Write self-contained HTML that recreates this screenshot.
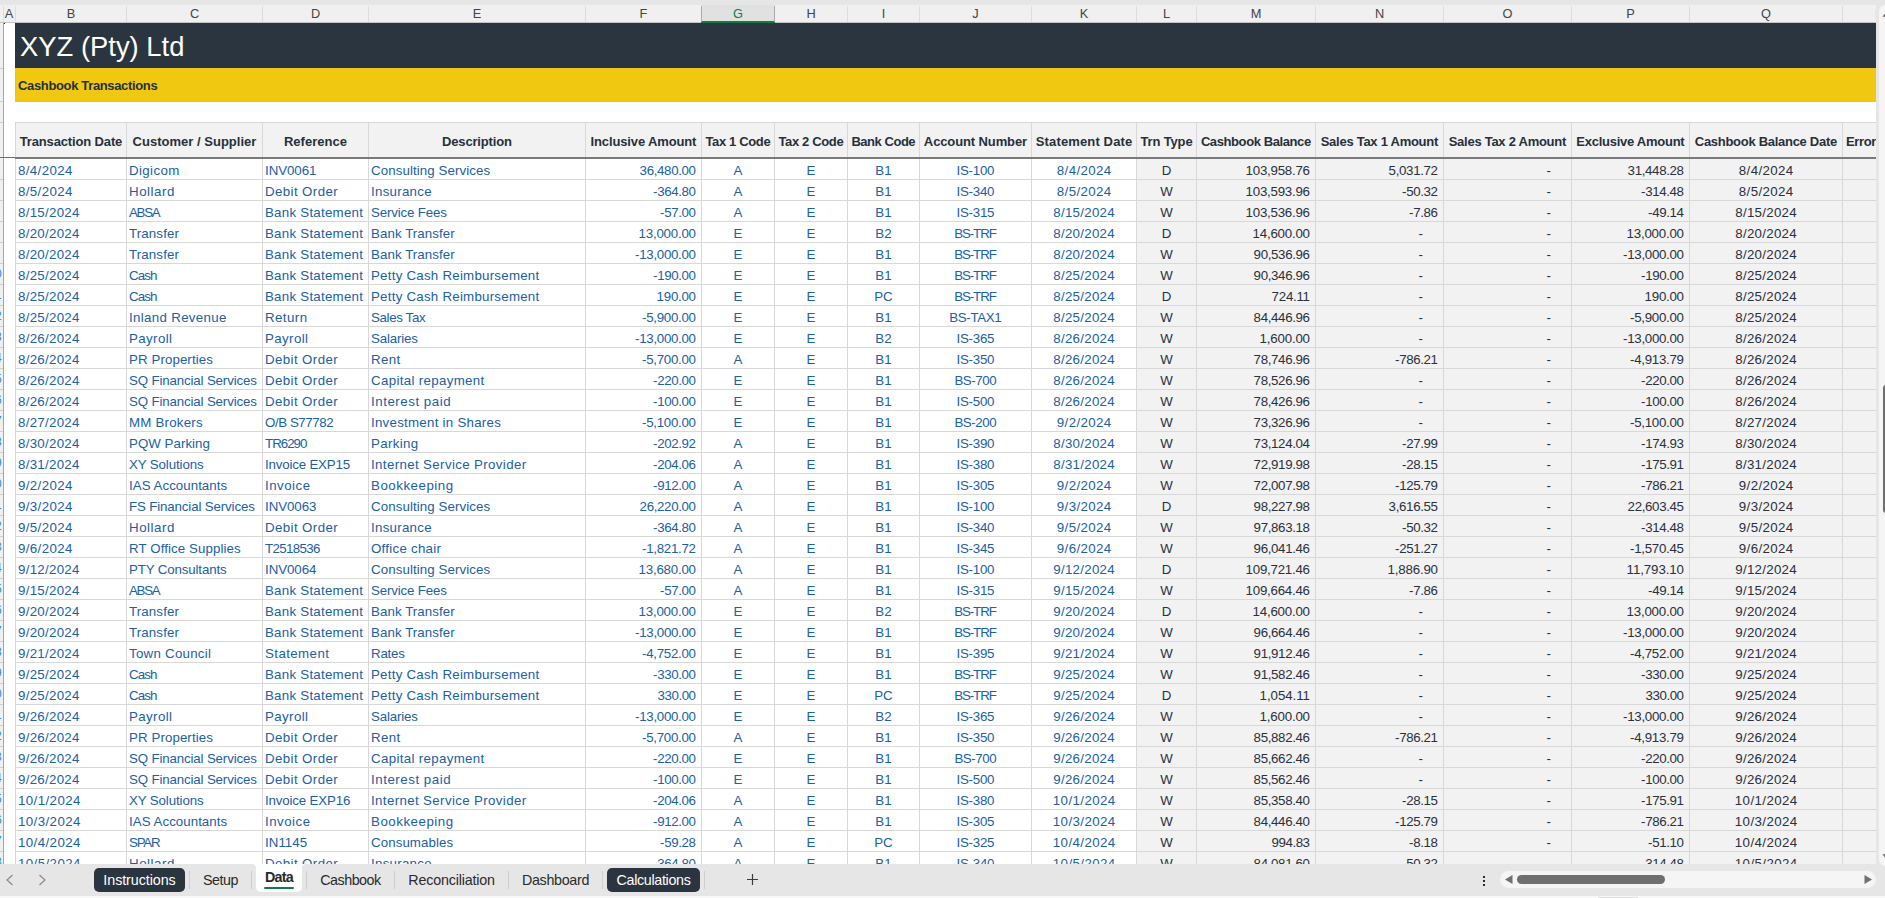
<!DOCTYPE html>
<html lang="en"><head><meta charset="utf-8"><title>Cashbook Transactions</title>
<style>
html,body{margin:0;padding:0}
body{width:1885px;height:898px;overflow:hidden;background:#e6e6e6;position:relative;font-family:"Liberation Sans",sans-serif;}
.abs,.abs *{position:absolute}
#app{position:absolute;left:0;top:0;width:1885px;height:898px;overflow:hidden}
#app div,#app span{position:absolute;white-space:nowrap}
#colhdr{left:0;top:5px;width:1876px;height:18px;background:#f0f0f0}
#colhdr .c{top:0px;height:17px;line-height:17px;text-align:center;font-size:12.8px;color:#444}
#colhdr .s{top:1px;width:1px;height:16px;background:#dcdcdc}
#sheet{left:0;top:23px;width:1876px;height:841px;background:#fff;overflow:hidden}
.vl{width:1px;background:#d8d8d8}
.hl{height:1px;background:#d8d8d8}
.t{font-size:13.3px;height:21px;line-height:21px;color:#2060a6}
.g{color:#2a303c}
.h{font-size:13.0px;font-weight:bold;color:#27303a;height:34px;line-height:34px;text-align:center}
.l{text-align:left}.r{text-align:right}.c{text-align:center}
#tabs{left:0;top:864px;width:1885px;height:32px;background:#e6e6e6}
#tabs .tab{top:4px;height:24px;line-height:24px;font-size:14.3px;color:#2b2b2b;text-align:center}
#tabs .pill{background:#2b353f;color:#fff;border-radius:5px}
#tabs .sep{top:7px;width:1px;height:18px;background:#cfcfcf}

</style></head><body><div id="app">
<div id="colhdr">
<div style="left:701px;top:0;width:74px;height:18px;background:#e1e1e1"></div>
<div style="left:0;top:17px;width:1876px;height:1px;background:#c4c4c4"></div>
<div style="left:701px;top:16px;width:74px;height:2px;background:#107c41"></div>
<div class="c" style="left:3px;width:12px">A</div>
<div class="s" style="left:3px"></div>
<div class="c" style="left:16px;width:110px">B</div>
<div class="c" style="left:127px;width:135px">C</div>
<div class="c" style="left:263px;width:105px">D</div>
<div class="c" style="left:369px;width:216px">E</div>
<div class="c" style="left:586px;width:115px">F</div>
<div class="c" style="left:702px;width:72px;color:#107c41">G</div>
<div class="c" style="left:775px;width:72px">H</div>
<div class="c" style="left:848px;width:71px">I</div>
<div class="c" style="left:920px;width:111px">J</div>
<div class="c" style="left:1032px;width:104px">K</div>
<div class="c" style="left:1137px;width:59px">L</div>
<div class="c" style="left:1197px;width:118px">M</div>
<div class="c" style="left:1316px;width:127px">N</div>
<div class="c" style="left:1444px;width:127px">O</div>
<div class="c" style="left:1572px;width:117px">P</div>
<div class="c" style="left:1690px;width:152px">Q</div>
<div class="s" style="left:15px"></div>
<div class="s" style="left:126px"></div>
<div class="s" style="left:262px"></div>
<div class="s" style="left:368px"></div>
<div class="s" style="left:585px"></div>
<div class="s" style="left:701px;background:#ababab"></div>
<div class="s" style="left:774px;background:#ababab"></div>
<div class="s" style="left:847px"></div>
<div class="s" style="left:919px"></div>
<div class="s" style="left:1031px"></div>
<div class="s" style="left:1136px"></div>
<div class="s" style="left:1196px"></div>
<div class="s" style="left:1315px"></div>
<div class="s" style="left:1443px"></div>
<div class="s" style="left:1571px"></div>
<div class="s" style="left:1689px"></div>
<div class="s" style="left:1842px"></div>
</div>
<div id="sheet">
<div style="left:1137px;top:136px;width:739px;height:720px;background:#f2f2f2"></div>
<div style="left:15px;top:0;width:1861px;height:45px;background:#2b353f"></div>
<div style="left:15px;top:45px;width:1861px;height:34px;background:#f1c811"></div>
<div id="title" style="left:20px;top:1px;height:45px;line-height:45px;font-size:27.4px;color:#fff">XYZ (Pty) Ltd</div>
<div id="sub" style="left:18px;top:46px;height:33px;line-height:33px;font-size:13.0px;letter-spacing:-0.351px;font-weight:bold;color:#27303a">Cashbook Transactions</div>
<div style="left:15px;top:99px;width:1861px;height:35px;background:#f2f2f2"></div>
<div class="hl" style="left:15px;top:99px;width:1861px"></div>
<div class="hl" style="left:15px;top:156px;width:1861px"></div>
<div class="hl" style="left:15px;top:177px;width:1861px"></div>
<div class="hl" style="left:15px;top:198px;width:1861px"></div>
<div class="hl" style="left:15px;top:219px;width:1861px"></div>
<div class="hl" style="left:15px;top:240px;width:1861px"></div>
<div class="hl" style="left:15px;top:261px;width:1861px"></div>
<div class="hl" style="left:15px;top:282px;width:1861px"></div>
<div class="hl" style="left:15px;top:303px;width:1861px"></div>
<div class="hl" style="left:15px;top:324px;width:1861px"></div>
<div class="hl" style="left:15px;top:345px;width:1861px"></div>
<div class="hl" style="left:15px;top:366px;width:1861px"></div>
<div class="hl" style="left:15px;top:387px;width:1861px"></div>
<div class="hl" style="left:15px;top:408px;width:1861px"></div>
<div class="hl" style="left:15px;top:429px;width:1861px"></div>
<div class="hl" style="left:15px;top:450px;width:1861px"></div>
<div class="hl" style="left:15px;top:471px;width:1861px"></div>
<div class="hl" style="left:15px;top:492px;width:1861px"></div>
<div class="hl" style="left:15px;top:513px;width:1861px"></div>
<div class="hl" style="left:15px;top:534px;width:1861px"></div>
<div class="hl" style="left:15px;top:555px;width:1861px"></div>
<div class="hl" style="left:15px;top:576px;width:1861px"></div>
<div class="hl" style="left:15px;top:597px;width:1861px"></div>
<div class="hl" style="left:15px;top:618px;width:1861px"></div>
<div class="hl" style="left:15px;top:639px;width:1861px"></div>
<div class="hl" style="left:15px;top:660px;width:1861px"></div>
<div class="hl" style="left:15px;top:681px;width:1861px"></div>
<div class="hl" style="left:15px;top:702px;width:1861px"></div>
<div class="hl" style="left:15px;top:723px;width:1861px"></div>
<div class="hl" style="left:15px;top:744px;width:1861px"></div>
<div class="hl" style="left:15px;top:765px;width:1861px"></div>
<div class="hl" style="left:15px;top:786px;width:1861px"></div>
<div class="hl" style="left:15px;top:807px;width:1861px"></div>
<div class="hl" style="left:15px;top:828px;width:1861px"></div>
<div class="hl" style="left:15px;top:849px;width:1861px"></div>
<div class="vl" style="left:15px;top:99px;height:742px"></div>
<div class="vl" style="left:126px;top:99px;height:742px"></div>
<div class="vl" style="left:262px;top:99px;height:742px"></div>
<div class="vl" style="left:368px;top:99px;height:742px"></div>
<div class="vl" style="left:585px;top:99px;height:742px"></div>
<div class="vl" style="left:701px;top:99px;height:742px"></div>
<div class="vl" style="left:774px;top:99px;height:742px"></div>
<div class="vl" style="left:847px;top:99px;height:742px"></div>
<div class="vl" style="left:919px;top:99px;height:742px"></div>
<div class="vl" style="left:1031px;top:99px;height:742px"></div>
<div class="vl" style="left:1136px;top:99px;height:742px"></div>
<div class="vl" style="left:1196px;top:99px;height:742px"></div>
<div class="vl" style="left:1315px;top:99px;height:742px"></div>
<div class="vl" style="left:1443px;top:99px;height:742px"></div>
<div class="vl" style="left:1571px;top:99px;height:742px"></div>
<div class="vl" style="left:1689px;top:99px;height:742px"></div>
<div class="vl" style="left:1842px;top:99px;height:742px"></div>
<div style="left:15px;top:134px;width:1861px;height:2px;background:#7a7a7a"></div>
<div class="h" style="left:16px;width:110px;top:102px;letter-spacing:-0.142px;text-indent:-0.142px">Transaction Date</div>
<div class="h" style="left:127px;width:135px;top:102px;letter-spacing:0.013px;text-indent:0.013px">Customer / Supplier</div>
<div class="h" style="left:263px;width:105px;top:102px;letter-spacing:0.033px;text-indent:0.033px">Reference</div>
<div class="h" style="left:369px;width:216px;top:102px;letter-spacing:-0.157px;text-indent:-0.157px">Description</div>
<div class="h" style="left:586px;width:115px;top:102px;letter-spacing:-0.135px;text-indent:-0.135px">Inclusive Amount</div>
<div class="h" style="left:702px;width:72px;top:102px;letter-spacing:-0.351px;text-indent:-0.351px">Tax 1 Code</div>
<div class="h" style="left:775px;width:72px;top:102px;letter-spacing:-0.351px;text-indent:-0.351px">Tax 2 Code</div>
<div class="h" style="left:848px;width:71px;top:102px;letter-spacing:-0.459px;text-indent:-0.459px">Bank Code</div>
<div class="h" style="left:920px;width:111px;top:102px;letter-spacing:-0.113px;text-indent:-0.113px">Account Number</div>
<div class="h" style="left:1032px;width:104px;top:102px;letter-spacing:0.138px;text-indent:0.138px">Statement Date</div>
<div class="h" style="left:1137px;width:59px;top:102px;letter-spacing:-0.14px;text-indent:-0.14px">Trn Type</div>
<div class="h" style="left:1197px;width:118px;top:102px;letter-spacing:-0.406px;text-indent:-0.406px">Cashbook Balance</div>
<div class="h" style="left:1316px;width:127px;top:102px;letter-spacing:-0.267px;text-indent:-0.267px">Sales Tax 1 Amount</div>
<div class="h" style="left:1444px;width:127px;top:102px;letter-spacing:-0.267px;text-indent:-0.267px">Sales Tax 2 Amount</div>
<div class="h" style="left:1572px;width:117px;top:102px;letter-spacing:-0.258px;text-indent:-0.258px">Exclusive Amount</div>
<div class="h" style="left:1690px;width:152px;top:102px;letter-spacing:-0.289px;text-indent:-0.289px">Cashbook Balance Date</div>
<div class="h" style="left:1846px;top:102px;text-align:left;letter-spacing:-0.35px">Error Code</div>
<div class="t l" style="left:18px;width:108px;letter-spacing:0.377px;top:137px">8/4/2024</div>
<div class="t l" style="left:129px;width:133px;letter-spacing:0.375px;top:137px">Digicom</div>
<div class="t l" style="left:265px;width:103px;letter-spacing:-0.059px;top:137px">INV0061</div>
<div class="t l" style="left:371px;width:214px;letter-spacing:0.091px;top:137px">Consulting Services</div>
<div class="t r" style="left:586px;width:110px;letter-spacing:-0.345px;margin-left:-0.345px;top:137px">36,480.00</div>
<div class="t c" style="left:702px;width:72px;top:137px">A</div>
<div class="t c" style="left:775px;width:72px;top:137px">E</div>
<div class="t c" style="left:848px;width:71px;top:137px">B1</div>
<div class="t c" style="left:920px;width:111px;letter-spacing:-0.276px;text-indent:-0.276px;top:137px">IS-100</div>
<div class="t c" style="left:1032px;width:104px;letter-spacing:0.377px;text-indent:0.377px;top:137px">8/4/2024</div>
<div class="t c g" style="left:1137px;width:59px;top:137px">D</div>
<div class="t r g" style="left:1197px;width:113px;letter-spacing:-0.239px;margin-left:-0.239px;top:137px">103,958.76</div>
<div class="t r g" style="left:1316px;width:122px;letter-spacing:-0.338px;margin-left:-0.338px;top:137px">5,031.72</div>
<div class="t r g" style="left:1444px;width:107px;top:137px">-</div>
<div class="t r g" style="left:1572px;width:112px;letter-spacing:-0.345px;margin-left:-0.345px;top:137px">31,448.28</div>
<div class="t c g" style="left:1690px;width:152px;letter-spacing:0.377px;text-indent:0.377px;top:137px">8/4/2024</div>
<div class="t l" style="left:18px;width:108px;letter-spacing:0.377px;top:158px">8/5/2024</div>
<div class="t l" style="left:129px;width:133px;letter-spacing:0.545px;top:158px">Hollard</div>
<div class="t l" style="left:265px;width:103px;letter-spacing:0.39px;top:158px">Debit Order</div>
<div class="t l" style="left:371px;width:214px;letter-spacing:0.275px;top:158px">Insurance</div>
<div class="t r" style="left:586px;width:110px;letter-spacing:-0.367px;margin-left:-0.367px;top:158px">-364.80</div>
<div class="t c" style="left:702px;width:72px;top:158px">A</div>
<div class="t c" style="left:775px;width:72px;top:158px">E</div>
<div class="t c" style="left:848px;width:71px;top:158px">B1</div>
<div class="t c" style="left:920px;width:111px;letter-spacing:-0.276px;text-indent:-0.276px;top:158px">IS-340</div>
<div class="t c" style="left:1032px;width:104px;letter-spacing:0.377px;text-indent:0.377px;top:158px">8/5/2024</div>
<div class="t c g" style="left:1137px;width:59px;top:158px">W</div>
<div class="t r g" style="left:1197px;width:113px;letter-spacing:-0.239px;margin-left:-0.239px;top:158px">103,593.96</div>
<div class="t r g" style="left:1316px;width:122px;letter-spacing:-0.362px;margin-left:-0.362px;top:158px">-50.32</div>
<div class="t r g" style="left:1444px;width:107px;top:158px">-</div>
<div class="t r g" style="left:1572px;width:112px;letter-spacing:-0.367px;margin-left:-0.367px;top:158px">-314.48</div>
<div class="t c g" style="left:1690px;width:152px;letter-spacing:0.377px;text-indent:0.377px;top:158px">8/5/2024</div>
<div class="t l" style="left:18px;width:108px;letter-spacing:0.28px;top:179px">8/15/2024</div>
<div class="t l" style="left:129px;width:133px;letter-spacing:-1.302px;top:179px">ABSA</div>
<div class="t l" style="left:265px;width:103px;letter-spacing:0.253px;top:179px">Bank Statement</div>
<div class="t l" style="left:371px;width:214px;letter-spacing:-0.159px;top:179px">Service Fees</div>
<div class="t r" style="left:586px;width:110px;letter-spacing:-0.362px;margin-left:-0.362px;top:179px">-57.00</div>
<div class="t c" style="left:702px;width:72px;top:179px">A</div>
<div class="t c" style="left:775px;width:72px;top:179px">E</div>
<div class="t c" style="left:848px;width:71px;top:179px">B1</div>
<div class="t c" style="left:920px;width:111px;letter-spacing:-0.276px;text-indent:-0.276px;top:179px">IS-315</div>
<div class="t c" style="left:1032px;width:104px;letter-spacing:0.28px;text-indent:0.28px;top:179px">8/15/2024</div>
<div class="t c g" style="left:1137px;width:59px;top:179px">W</div>
<div class="t r g" style="left:1197px;width:113px;letter-spacing:-0.239px;margin-left:-0.239px;top:179px">103,536.96</div>
<div class="t r g" style="left:1316px;width:122px;letter-spacing:-0.353px;margin-left:-0.353px;top:179px">-7.86</div>
<div class="t r g" style="left:1444px;width:107px;top:179px">-</div>
<div class="t r g" style="left:1572px;width:112px;letter-spacing:-0.362px;margin-left:-0.362px;top:179px">-49.14</div>
<div class="t c g" style="left:1690px;width:152px;letter-spacing:0.28px;text-indent:0.28px;top:179px">8/15/2024</div>
<div class="t l" style="left:18px;width:108px;letter-spacing:0.28px;top:200px">8/20/2024</div>
<div class="t l" style="left:129px;width:133px;letter-spacing:0.131px;top:200px">Transfer</div>
<div class="t l" style="left:265px;width:103px;letter-spacing:0.253px;top:200px">Bank Statement</div>
<div class="t l" style="left:371px;width:214px;letter-spacing:0.076px;top:200px">Bank Transfer</div>
<div class="t r" style="left:586px;width:110px;letter-spacing:-0.22px;margin-left:-0.22px;top:200px">13,000.00</div>
<div class="t c" style="left:702px;width:72px;top:200px">E</div>
<div class="t c" style="left:775px;width:72px;top:200px">E</div>
<div class="t c" style="left:848px;width:71px;top:200px">B2</div>
<div class="t c" style="left:920px;width:111px;letter-spacing:-1.078px;text-indent:-1.078px;top:200px">BS-TRF</div>
<div class="t c" style="left:1032px;width:104px;letter-spacing:0.28px;text-indent:0.28px;top:200px">8/20/2024</div>
<div class="t c g" style="left:1137px;width:59px;top:200px">D</div>
<div class="t r g" style="left:1197px;width:113px;letter-spacing:-0.22px;margin-left:-0.22px;top:200px">14,600.00</div>
<div class="t r g" style="left:1316px;width:107px;top:200px">-</div>
<div class="t r g" style="left:1444px;width:107px;top:200px">-</div>
<div class="t r g" style="left:1572px;width:112px;letter-spacing:-0.22px;margin-left:-0.22px;top:200px">13,000.00</div>
<div class="t c g" style="left:1690px;width:152px;letter-spacing:0.28px;text-indent:0.28px;top:200px">8/20/2024</div>
<div class="t l" style="left:18px;width:108px;letter-spacing:0.28px;top:221px">8/20/2024</div>
<div class="t l" style="left:129px;width:133px;letter-spacing:0.131px;top:221px">Transfer</div>
<div class="t l" style="left:265px;width:103px;letter-spacing:0.253px;top:221px">Bank Statement</div>
<div class="t l" style="left:371px;width:214px;letter-spacing:0.076px;top:221px">Bank Transfer</div>
<div class="t r" style="left:586px;width:110px;letter-spacing:-0.299px;margin-left:-0.299px;top:221px">-13,000.00</div>
<div class="t c" style="left:702px;width:72px;top:221px">E</div>
<div class="t c" style="left:775px;width:72px;top:221px">E</div>
<div class="t c" style="left:848px;width:71px;top:221px">B1</div>
<div class="t c" style="left:920px;width:111px;letter-spacing:-1.078px;text-indent:-1.078px;top:221px">BS-TRF</div>
<div class="t c" style="left:1032px;width:104px;letter-spacing:0.28px;text-indent:0.28px;top:221px">8/20/2024</div>
<div class="t c g" style="left:1137px;width:59px;top:221px">W</div>
<div class="t r g" style="left:1197px;width:113px;letter-spacing:-0.345px;margin-left:-0.345px;top:221px">90,536.96</div>
<div class="t r g" style="left:1316px;width:107px;top:221px">-</div>
<div class="t r g" style="left:1444px;width:107px;top:221px">-</div>
<div class="t r g" style="left:1572px;width:112px;letter-spacing:-0.299px;margin-left:-0.299px;top:221px">-13,000.00</div>
<div class="t c g" style="left:1690px;width:152px;letter-spacing:0.28px;text-indent:0.28px;top:221px">8/20/2024</div>
<div class="t l" style="left:18px;width:108px;letter-spacing:0.28px;top:242px">8/25/2024</div>
<div class="t l" style="left:129px;width:133px;letter-spacing:-0.882px;top:242px">Cash</div>
<div class="t l" style="left:265px;width:103px;letter-spacing:0.253px;top:242px">Bank Statement</div>
<div class="t l" style="left:371px;width:214px;letter-spacing:0.244px;top:242px">Petty Cash Reimbursement</div>
<div class="t r" style="left:586px;width:110px;letter-spacing:-0.367px;margin-left:-0.367px;top:242px">-190.00</div>
<div class="t c" style="left:702px;width:72px;top:242px">E</div>
<div class="t c" style="left:775px;width:72px;top:242px">E</div>
<div class="t c" style="left:848px;width:71px;top:242px">B1</div>
<div class="t c" style="left:920px;width:111px;letter-spacing:-1.078px;text-indent:-1.078px;top:242px">BS-TRF</div>
<div class="t c" style="left:1032px;width:104px;letter-spacing:0.28px;text-indent:0.28px;top:242px">8/25/2024</div>
<div class="t c g" style="left:1137px;width:59px;top:242px">W</div>
<div class="t r g" style="left:1197px;width:113px;letter-spacing:-0.345px;margin-left:-0.345px;top:242px">90,346.96</div>
<div class="t r g" style="left:1316px;width:107px;top:242px">-</div>
<div class="t r g" style="left:1444px;width:107px;top:242px">-</div>
<div class="t r g" style="left:1572px;width:112px;letter-spacing:-0.367px;margin-left:-0.367px;top:242px">-190.00</div>
<div class="t c g" style="left:1690px;width:152px;letter-spacing:0.28px;text-indent:0.28px;top:242px">8/25/2024</div>
<div class="t l" style="left:18px;width:108px;letter-spacing:0.28px;top:263px">8/25/2024</div>
<div class="t l" style="left:129px;width:133px;letter-spacing:-0.882px;top:263px">Cash</div>
<div class="t l" style="left:265px;width:103px;letter-spacing:0.253px;top:263px">Bank Statement</div>
<div class="t l" style="left:371px;width:214px;letter-spacing:0.244px;top:263px">Petty Cash Reimbursement</div>
<div class="t r" style="left:586px;width:110px;letter-spacing:-0.255px;margin-left:-0.255px;top:263px">190.00</div>
<div class="t c" style="left:702px;width:72px;top:263px">E</div>
<div class="t c" style="left:775px;width:72px;top:263px">E</div>
<div class="t c" style="left:848px;width:71px;top:263px">PC</div>
<div class="t c" style="left:920px;width:111px;letter-spacing:-1.078px;text-indent:-1.078px;top:263px">BS-TRF</div>
<div class="t c" style="left:1032px;width:104px;letter-spacing:0.28px;text-indent:0.28px;top:263px">8/25/2024</div>
<div class="t c g" style="left:1137px;width:59px;top:263px">D</div>
<div class="t r g" style="left:1197px;width:113px;letter-spacing:-0.258px;margin-left:-0.258px;top:263px">724.11</div>
<div class="t r g" style="left:1316px;width:107px;top:263px">-</div>
<div class="t r g" style="left:1444px;width:107px;top:263px">-</div>
<div class="t r g" style="left:1572px;width:112px;letter-spacing:-0.255px;margin-left:-0.255px;top:263px">190.00</div>
<div class="t c g" style="left:1690px;width:152px;letter-spacing:0.28px;text-indent:0.28px;top:263px">8/25/2024</div>
<div class="t l" style="left:18px;width:108px;letter-spacing:0.28px;top:284px">8/25/2024</div>
<div class="t l" style="left:129px;width:133px;letter-spacing:0.327px;top:284px">Inland Revenue</div>
<div class="t l" style="left:265px;width:103px;letter-spacing:0.437px;top:284px">Return</div>
<div class="t l" style="left:371px;width:214px;letter-spacing:-0.35px;top:284px">Sales Tax</div>
<div class="t r" style="left:586px;width:110px;letter-spacing:-0.287px;margin-left:-0.287px;top:284px">-5,900.00</div>
<div class="t c" style="left:702px;width:72px;top:284px">E</div>
<div class="t c" style="left:775px;width:72px;top:284px">E</div>
<div class="t c" style="left:848px;width:71px;top:284px">B1</div>
<div class="t c" style="left:920px;width:111px;letter-spacing:-0.34px;text-indent:-0.34px;top:284px">BS-TAX1</div>
<div class="t c" style="left:1032px;width:104px;letter-spacing:0.28px;text-indent:0.28px;top:284px">8/25/2024</div>
<div class="t c g" style="left:1137px;width:59px;top:284px">W</div>
<div class="t r g" style="left:1197px;width:113px;letter-spacing:-0.345px;margin-left:-0.345px;top:284px">84,446.96</div>
<div class="t r g" style="left:1316px;width:107px;top:284px">-</div>
<div class="t r g" style="left:1444px;width:107px;top:284px">-</div>
<div class="t r g" style="left:1572px;width:112px;letter-spacing:-0.287px;margin-left:-0.287px;top:284px">-5,900.00</div>
<div class="t c g" style="left:1690px;width:152px;letter-spacing:0.28px;text-indent:0.28px;top:284px">8/25/2024</div>
<div class="t l" style="left:18px;width:108px;letter-spacing:0.28px;top:305px">8/26/2024</div>
<div class="t l" style="left:129px;width:133px;letter-spacing:0.385px;top:305px">Payroll</div>
<div class="t l" style="left:265px;width:103px;letter-spacing:0.385px;top:305px">Payroll</div>
<div class="t l" style="left:371px;width:214px;letter-spacing:-0.17px;top:305px">Salaries</div>
<div class="t r" style="left:586px;width:110px;letter-spacing:-0.299px;margin-left:-0.299px;top:305px">-13,000.00</div>
<div class="t c" style="left:702px;width:72px;top:305px">E</div>
<div class="t c" style="left:775px;width:72px;top:305px">E</div>
<div class="t c" style="left:848px;width:71px;top:305px">B2</div>
<div class="t c" style="left:920px;width:111px;letter-spacing:-0.276px;text-indent:-0.276px;top:305px">IS-365</div>
<div class="t c" style="left:1032px;width:104px;letter-spacing:0.28px;text-indent:0.28px;top:305px">8/26/2024</div>
<div class="t c g" style="left:1137px;width:59px;top:305px">W</div>
<div class="t r g" style="left:1197px;width:113px;letter-spacing:-0.195px;margin-left:-0.195px;top:305px">1,600.00</div>
<div class="t r g" style="left:1316px;width:107px;top:305px">-</div>
<div class="t r g" style="left:1444px;width:107px;top:305px">-</div>
<div class="t r g" style="left:1572px;width:112px;letter-spacing:-0.299px;margin-left:-0.299px;top:305px">-13,000.00</div>
<div class="t c g" style="left:1690px;width:152px;letter-spacing:0.28px;text-indent:0.28px;top:305px">8/26/2024</div>
<div class="t l" style="left:18px;width:108px;letter-spacing:0.28px;top:326px">8/26/2024</div>
<div class="t l" style="left:129px;width:133px;letter-spacing:0.09px;top:326px">PR Properties</div>
<div class="t l" style="left:265px;width:103px;letter-spacing:0.39px;top:326px">Debit Order</div>
<div class="t l" style="left:371px;width:214px;letter-spacing:0.369px;top:326px">Rent</div>
<div class="t r" style="left:586px;width:110px;letter-spacing:-0.287px;margin-left:-0.287px;top:326px">-5,700.00</div>
<div class="t c" style="left:702px;width:72px;top:326px">A</div>
<div class="t c" style="left:775px;width:72px;top:326px">E</div>
<div class="t c" style="left:848px;width:71px;top:326px">B1</div>
<div class="t c" style="left:920px;width:111px;letter-spacing:-0.276px;text-indent:-0.276px;top:326px">IS-350</div>
<div class="t c" style="left:1032px;width:104px;letter-spacing:0.28px;text-indent:0.28px;top:326px">8/26/2024</div>
<div class="t c g" style="left:1137px;width:59px;top:326px">W</div>
<div class="t r g" style="left:1197px;width:113px;letter-spacing:-0.345px;margin-left:-0.345px;top:326px">78,746.96</div>
<div class="t r g" style="left:1316px;width:122px;letter-spacing:-0.367px;margin-left:-0.367px;top:326px">-786.21</div>
<div class="t r g" style="left:1444px;width:107px;top:326px">-</div>
<div class="t r g" style="left:1572px;width:112px;letter-spacing:-0.287px;margin-left:-0.287px;top:326px">-4,913.79</div>
<div class="t c g" style="left:1690px;width:152px;letter-spacing:0.28px;text-indent:0.28px;top:326px">8/26/2024</div>
<div class="t l" style="left:18px;width:108px;letter-spacing:0.28px;top:347px">8/26/2024</div>
<div class="t l" style="left:129px;width:133px;letter-spacing:-0.148px;top:347px">SQ Financial Services</div>
<div class="t l" style="left:265px;width:103px;letter-spacing:0.39px;top:347px">Debit Order</div>
<div class="t l" style="left:371px;width:214px;letter-spacing:0.33px;top:347px">Capital repayment</div>
<div class="t r" style="left:586px;width:110px;letter-spacing:-0.367px;margin-left:-0.367px;top:347px">-220.00</div>
<div class="t c" style="left:702px;width:72px;top:347px">E</div>
<div class="t c" style="left:775px;width:72px;top:347px">E</div>
<div class="t c" style="left:848px;width:71px;top:347px">B1</div>
<div class="t c" style="left:920px;width:111px;letter-spacing:-0.451px;text-indent:-0.451px;top:347px">BS-700</div>
<div class="t c" style="left:1032px;width:104px;letter-spacing:0.28px;text-indent:0.28px;top:347px">8/26/2024</div>
<div class="t c g" style="left:1137px;width:59px;top:347px">W</div>
<div class="t r g" style="left:1197px;width:113px;letter-spacing:-0.345px;margin-left:-0.345px;top:347px">78,526.96</div>
<div class="t r g" style="left:1316px;width:107px;top:347px">-</div>
<div class="t r g" style="left:1444px;width:107px;top:347px">-</div>
<div class="t r g" style="left:1572px;width:112px;letter-spacing:-0.367px;margin-left:-0.367px;top:347px">-220.00</div>
<div class="t c g" style="left:1690px;width:152px;letter-spacing:0.28px;text-indent:0.28px;top:347px">8/26/2024</div>
<div class="t l" style="left:18px;width:108px;letter-spacing:0.28px;top:368px">8/26/2024</div>
<div class="t l" style="left:129px;width:133px;letter-spacing:-0.148px;top:368px">SQ Financial Services</div>
<div class="t l" style="left:265px;width:103px;letter-spacing:0.39px;top:368px">Debit Order</div>
<div class="t l" style="left:371px;width:214px;letter-spacing:0.535px;top:368px">Interest paid</div>
<div class="t r" style="left:586px;width:110px;letter-spacing:-0.367px;margin-left:-0.367px;top:368px">-100.00</div>
<div class="t c" style="left:702px;width:72px;top:368px">E</div>
<div class="t c" style="left:775px;width:72px;top:368px">E</div>
<div class="t c" style="left:848px;width:71px;top:368px">B1</div>
<div class="t c" style="left:920px;width:111px;letter-spacing:-0.276px;text-indent:-0.276px;top:368px">IS-500</div>
<div class="t c" style="left:1032px;width:104px;letter-spacing:0.28px;text-indent:0.28px;top:368px">8/26/2024</div>
<div class="t c g" style="left:1137px;width:59px;top:368px">W</div>
<div class="t r g" style="left:1197px;width:113px;letter-spacing:-0.345px;margin-left:-0.345px;top:368px">78,426.96</div>
<div class="t r g" style="left:1316px;width:107px;top:368px">-</div>
<div class="t r g" style="left:1444px;width:107px;top:368px">-</div>
<div class="t r g" style="left:1572px;width:112px;letter-spacing:-0.367px;margin-left:-0.367px;top:368px">-100.00</div>
<div class="t c g" style="left:1690px;width:152px;letter-spacing:0.28px;text-indent:0.28px;top:368px">8/26/2024</div>
<div class="t l" style="left:18px;width:108px;letter-spacing:0.28px;top:389px">8/27/2024</div>
<div class="t l" style="left:129px;width:133px;letter-spacing:0.221px;top:389px">MM Brokers</div>
<div class="t l" style="left:265px;width:103px;letter-spacing:-0.428px;top:389px">O/B S77782</div>
<div class="t l" style="left:371px;width:214px;letter-spacing:0.26px;top:389px">Investment in Shares</div>
<div class="t r" style="left:586px;width:110px;letter-spacing:-0.287px;margin-left:-0.287px;top:389px">-5,100.00</div>
<div class="t c" style="left:702px;width:72px;top:389px">E</div>
<div class="t c" style="left:775px;width:72px;top:389px">E</div>
<div class="t c" style="left:848px;width:71px;top:389px">B1</div>
<div class="t c" style="left:920px;width:111px;letter-spacing:-0.451px;text-indent:-0.451px;top:389px">BS-200</div>
<div class="t c" style="left:1032px;width:104px;letter-spacing:0.377px;text-indent:0.377px;top:389px">9/2/2024</div>
<div class="t c g" style="left:1137px;width:59px;top:389px">W</div>
<div class="t r g" style="left:1197px;width:113px;letter-spacing:-0.345px;margin-left:-0.345px;top:389px">73,326.96</div>
<div class="t r g" style="left:1316px;width:107px;top:389px">-</div>
<div class="t r g" style="left:1444px;width:107px;top:389px">-</div>
<div class="t r g" style="left:1572px;width:112px;letter-spacing:-0.287px;margin-left:-0.287px;top:389px">-5,100.00</div>
<div class="t c g" style="left:1690px;width:152px;letter-spacing:0.28px;text-indent:0.28px;top:389px">8/27/2024</div>
<div class="t l" style="left:18px;width:108px;letter-spacing:0.28px;top:410px">8/30/2024</div>
<div class="t l" style="left:129px;width:133px;letter-spacing:0.035px;top:410px">PQW Parking</div>
<div class="t l" style="left:265px;width:103px;letter-spacing:-0.982px;top:410px">TR6290</div>
<div class="t l" style="left:371px;width:214px;letter-spacing:0.335px;top:410px">Parking</div>
<div class="t r" style="left:586px;width:110px;letter-spacing:-0.367px;margin-left:-0.367px;top:410px">-202.92</div>
<div class="t c" style="left:702px;width:72px;top:410px">A</div>
<div class="t c" style="left:775px;width:72px;top:410px">E</div>
<div class="t c" style="left:848px;width:71px;top:410px">B1</div>
<div class="t c" style="left:920px;width:111px;letter-spacing:-0.276px;text-indent:-0.276px;top:410px">IS-390</div>
<div class="t c" style="left:1032px;width:104px;letter-spacing:0.28px;text-indent:0.28px;top:410px">8/30/2024</div>
<div class="t c g" style="left:1137px;width:59px;top:410px">W</div>
<div class="t r g" style="left:1197px;width:113px;letter-spacing:-0.345px;margin-left:-0.345px;top:410px">73,124.04</div>
<div class="t r g" style="left:1316px;width:122px;letter-spacing:-0.362px;margin-left:-0.362px;top:410px">-27.99</div>
<div class="t r g" style="left:1444px;width:107px;top:410px">-</div>
<div class="t r g" style="left:1572px;width:112px;letter-spacing:-0.367px;margin-left:-0.367px;top:410px">-174.93</div>
<div class="t c g" style="left:1690px;width:152px;letter-spacing:0.28px;text-indent:0.28px;top:410px">8/30/2024</div>
<div class="t l" style="left:18px;width:108px;letter-spacing:0.28px;top:431px">8/31/2024</div>
<div class="t l" style="left:129px;width:133px;letter-spacing:-0.117px;top:431px">XY Solutions</div>
<div class="t l" style="left:265px;width:103px;letter-spacing:-0.177px;top:431px">Invoice EXP15</div>
<div class="t l" style="left:371px;width:214px;letter-spacing:0.367px;top:431px">Internet Service Provider</div>
<div class="t r" style="left:586px;width:110px;letter-spacing:-0.367px;margin-left:-0.367px;top:431px">-204.06</div>
<div class="t c" style="left:702px;width:72px;top:431px">A</div>
<div class="t c" style="left:775px;width:72px;top:431px">E</div>
<div class="t c" style="left:848px;width:71px;top:431px">B1</div>
<div class="t c" style="left:920px;width:111px;letter-spacing:-0.276px;text-indent:-0.276px;top:431px">IS-380</div>
<div class="t c" style="left:1032px;width:104px;letter-spacing:0.28px;text-indent:0.28px;top:431px">8/31/2024</div>
<div class="t c g" style="left:1137px;width:59px;top:431px">W</div>
<div class="t r g" style="left:1197px;width:113px;letter-spacing:-0.345px;margin-left:-0.345px;top:431px">72,919.98</div>
<div class="t r g" style="left:1316px;width:122px;letter-spacing:-0.362px;margin-left:-0.362px;top:431px">-28.15</div>
<div class="t r g" style="left:1444px;width:107px;top:431px">-</div>
<div class="t r g" style="left:1572px;width:112px;letter-spacing:-0.367px;margin-left:-0.367px;top:431px">-175.91</div>
<div class="t c g" style="left:1690px;width:152px;letter-spacing:0.28px;text-indent:0.28px;top:431px">8/31/2024</div>
<div class="t l" style="left:18px;width:108px;letter-spacing:0.377px;top:452px">9/2/2024</div>
<div class="t l" style="left:129px;width:133px;letter-spacing:0.039px;top:452px">IAS Accountants</div>
<div class="t l" style="left:265px;width:103px;letter-spacing:0.494px;top:452px">Invoice</div>
<div class="t l" style="left:371px;width:214px;letter-spacing:0.521px;top:452px">Bookkeeping</div>
<div class="t r" style="left:586px;width:110px;letter-spacing:-0.367px;margin-left:-0.367px;top:452px">-912.00</div>
<div class="t c" style="left:702px;width:72px;top:452px">A</div>
<div class="t c" style="left:775px;width:72px;top:452px">E</div>
<div class="t c" style="left:848px;width:71px;top:452px">B1</div>
<div class="t c" style="left:920px;width:111px;letter-spacing:-0.276px;text-indent:-0.276px;top:452px">IS-305</div>
<div class="t c" style="left:1032px;width:104px;letter-spacing:0.377px;text-indent:0.377px;top:452px">9/2/2024</div>
<div class="t c g" style="left:1137px;width:59px;top:452px">W</div>
<div class="t r g" style="left:1197px;width:113px;letter-spacing:-0.345px;margin-left:-0.345px;top:452px">72,007.98</div>
<div class="t r g" style="left:1316px;width:122px;letter-spacing:-0.367px;margin-left:-0.367px;top:452px">-125.79</div>
<div class="t r g" style="left:1444px;width:107px;top:452px">-</div>
<div class="t r g" style="left:1572px;width:112px;letter-spacing:-0.367px;margin-left:-0.367px;top:452px">-786.21</div>
<div class="t c g" style="left:1690px;width:152px;letter-spacing:0.377px;text-indent:0.377px;top:452px">9/2/2024</div>
<div class="t l" style="left:18px;width:108px;letter-spacing:0.377px;top:473px">9/3/2024</div>
<div class="t l" style="left:129px;width:133px;letter-spacing:-0.137px;top:473px">FS Financial Services</div>
<div class="t l" style="left:265px;width:103px;letter-spacing:-0.059px;top:473px">INV0063</div>
<div class="t l" style="left:371px;width:214px;letter-spacing:0.091px;top:473px">Consulting Services</div>
<div class="t r" style="left:586px;width:110px;letter-spacing:-0.345px;margin-left:-0.345px;top:473px">26,220.00</div>
<div class="t c" style="left:702px;width:72px;top:473px">A</div>
<div class="t c" style="left:775px;width:72px;top:473px">E</div>
<div class="t c" style="left:848px;width:71px;top:473px">B1</div>
<div class="t c" style="left:920px;width:111px;letter-spacing:-0.276px;text-indent:-0.276px;top:473px">IS-100</div>
<div class="t c" style="left:1032px;width:104px;letter-spacing:0.377px;text-indent:0.377px;top:473px">9/3/2024</div>
<div class="t c g" style="left:1137px;width:59px;top:473px">D</div>
<div class="t r g" style="left:1197px;width:113px;letter-spacing:-0.345px;margin-left:-0.345px;top:473px">98,227.98</div>
<div class="t r g" style="left:1316px;width:122px;letter-spacing:-0.338px;margin-left:-0.338px;top:473px">3,616.55</div>
<div class="t r g" style="left:1444px;width:107px;top:473px">-</div>
<div class="t r g" style="left:1572px;width:112px;letter-spacing:-0.345px;margin-left:-0.345px;top:473px">22,603.45</div>
<div class="t c g" style="left:1690px;width:152px;letter-spacing:0.377px;text-indent:0.377px;top:473px">9/3/2024</div>
<div class="t l" style="left:18px;width:108px;letter-spacing:0.377px;top:494px">9/5/2024</div>
<div class="t l" style="left:129px;width:133px;letter-spacing:0.545px;top:494px">Hollard</div>
<div class="t l" style="left:265px;width:103px;letter-spacing:0.39px;top:494px">Debit Order</div>
<div class="t l" style="left:371px;width:214px;letter-spacing:0.275px;top:494px">Insurance</div>
<div class="t r" style="left:586px;width:110px;letter-spacing:-0.367px;margin-left:-0.367px;top:494px">-364.80</div>
<div class="t c" style="left:702px;width:72px;top:494px">A</div>
<div class="t c" style="left:775px;width:72px;top:494px">E</div>
<div class="t c" style="left:848px;width:71px;top:494px">B1</div>
<div class="t c" style="left:920px;width:111px;letter-spacing:-0.276px;text-indent:-0.276px;top:494px">IS-340</div>
<div class="t c" style="left:1032px;width:104px;letter-spacing:0.377px;text-indent:0.377px;top:494px">9/5/2024</div>
<div class="t c g" style="left:1137px;width:59px;top:494px">W</div>
<div class="t r g" style="left:1197px;width:113px;letter-spacing:-0.345px;margin-left:-0.345px;top:494px">97,863.18</div>
<div class="t r g" style="left:1316px;width:122px;letter-spacing:-0.362px;margin-left:-0.362px;top:494px">-50.32</div>
<div class="t r g" style="left:1444px;width:107px;top:494px">-</div>
<div class="t r g" style="left:1572px;width:112px;letter-spacing:-0.367px;margin-left:-0.367px;top:494px">-314.48</div>
<div class="t c g" style="left:1690px;width:152px;letter-spacing:0.377px;text-indent:0.377px;top:494px">9/5/2024</div>
<div class="t l" style="left:18px;width:108px;letter-spacing:0.377px;top:515px">9/6/2024</div>
<div class="t l" style="left:129px;width:133px;letter-spacing:0.087px;top:515px">RT Office Supplies</div>
<div class="t l" style="left:265px;width:103px;letter-spacing:-0.642px;top:515px">T2518536</div>
<div class="t l" style="left:371px;width:214px;letter-spacing:0.266px;top:515px">Office chair</div>
<div class="t r" style="left:586px;width:110px;letter-spacing:-0.287px;margin-left:-0.287px;top:515px">-1,821.72</div>
<div class="t c" style="left:702px;width:72px;top:515px">A</div>
<div class="t c" style="left:775px;width:72px;top:515px">E</div>
<div class="t c" style="left:848px;width:71px;top:515px">B1</div>
<div class="t c" style="left:920px;width:111px;letter-spacing:-0.276px;text-indent:-0.276px;top:515px">IS-345</div>
<div class="t c" style="left:1032px;width:104px;letter-spacing:0.377px;text-indent:0.377px;top:515px">9/6/2024</div>
<div class="t c g" style="left:1137px;width:59px;top:515px">W</div>
<div class="t r g" style="left:1197px;width:113px;letter-spacing:-0.345px;margin-left:-0.345px;top:515px">96,041.46</div>
<div class="t r g" style="left:1316px;width:122px;letter-spacing:-0.367px;margin-left:-0.367px;top:515px">-251.27</div>
<div class="t r g" style="left:1444px;width:107px;top:515px">-</div>
<div class="t r g" style="left:1572px;width:112px;letter-spacing:-0.287px;margin-left:-0.287px;top:515px">-1,570.45</div>
<div class="t c g" style="left:1690px;width:152px;letter-spacing:0.377px;text-indent:0.377px;top:515px">9/6/2024</div>
<div class="t l" style="left:18px;width:108px;letter-spacing:0.28px;top:536px">9/12/2024</div>
<div class="t l" style="left:129px;width:133px;letter-spacing:-0.137px;top:536px">PTY Consultants</div>
<div class="t l" style="left:265px;width:103px;letter-spacing:-0.059px;top:536px">INV0064</div>
<div class="t l" style="left:371px;width:214px;letter-spacing:0.091px;top:536px">Consulting Services</div>
<div class="t r" style="left:586px;width:110px;letter-spacing:-0.22px;margin-left:-0.22px;top:536px">13,680.00</div>
<div class="t c" style="left:702px;width:72px;top:536px">A</div>
<div class="t c" style="left:775px;width:72px;top:536px">E</div>
<div class="t c" style="left:848px;width:71px;top:536px">B1</div>
<div class="t c" style="left:920px;width:111px;letter-spacing:-0.276px;text-indent:-0.276px;top:536px">IS-100</div>
<div class="t c" style="left:1032px;width:104px;letter-spacing:0.28px;text-indent:0.28px;top:536px">9/12/2024</div>
<div class="t c g" style="left:1137px;width:59px;top:536px">D</div>
<div class="t r g" style="left:1197px;width:113px;letter-spacing:-0.239px;margin-left:-0.239px;top:536px">109,721.46</div>
<div class="t r g" style="left:1316px;width:122px;letter-spacing:-0.195px;margin-left:-0.195px;top:536px">1,886.90</div>
<div class="t r g" style="left:1444px;width:107px;top:536px">-</div>
<div class="t r g" style="left:1572px;width:112px;letter-spacing:-0.097px;margin-left:-0.097px;top:536px">11,793.10</div>
<div class="t c g" style="left:1690px;width:152px;letter-spacing:0.28px;text-indent:0.28px;top:536px">9/12/2024</div>
<div class="t l" style="left:18px;width:108px;letter-spacing:0.28px;top:557px">9/15/2024</div>
<div class="t l" style="left:129px;width:133px;letter-spacing:-1.302px;top:557px">ABSA</div>
<div class="t l" style="left:265px;width:103px;letter-spacing:0.253px;top:557px">Bank Statement</div>
<div class="t l" style="left:371px;width:214px;letter-spacing:-0.159px;top:557px">Service Fees</div>
<div class="t r" style="left:586px;width:110px;letter-spacing:-0.362px;margin-left:-0.362px;top:557px">-57.00</div>
<div class="t c" style="left:702px;width:72px;top:557px">A</div>
<div class="t c" style="left:775px;width:72px;top:557px">E</div>
<div class="t c" style="left:848px;width:71px;top:557px">B1</div>
<div class="t c" style="left:920px;width:111px;letter-spacing:-0.276px;text-indent:-0.276px;top:557px">IS-315</div>
<div class="t c" style="left:1032px;width:104px;letter-spacing:0.28px;text-indent:0.28px;top:557px">9/15/2024</div>
<div class="t c g" style="left:1137px;width:59px;top:557px">W</div>
<div class="t r g" style="left:1197px;width:113px;letter-spacing:-0.239px;margin-left:-0.239px;top:557px">109,664.46</div>
<div class="t r g" style="left:1316px;width:122px;letter-spacing:-0.353px;margin-left:-0.353px;top:557px">-7.86</div>
<div class="t r g" style="left:1444px;width:107px;top:557px">-</div>
<div class="t r g" style="left:1572px;width:112px;letter-spacing:-0.362px;margin-left:-0.362px;top:557px">-49.14</div>
<div class="t c g" style="left:1690px;width:152px;letter-spacing:0.28px;text-indent:0.28px;top:557px">9/15/2024</div>
<div class="t l" style="left:18px;width:108px;letter-spacing:0.28px;top:578px">9/20/2024</div>
<div class="t l" style="left:129px;width:133px;letter-spacing:0.131px;top:578px">Transfer</div>
<div class="t l" style="left:265px;width:103px;letter-spacing:0.253px;top:578px">Bank Statement</div>
<div class="t l" style="left:371px;width:214px;letter-spacing:0.076px;top:578px">Bank Transfer</div>
<div class="t r" style="left:586px;width:110px;letter-spacing:-0.22px;margin-left:-0.22px;top:578px">13,000.00</div>
<div class="t c" style="left:702px;width:72px;top:578px">E</div>
<div class="t c" style="left:775px;width:72px;top:578px">E</div>
<div class="t c" style="left:848px;width:71px;top:578px">B2</div>
<div class="t c" style="left:920px;width:111px;letter-spacing:-1.078px;text-indent:-1.078px;top:578px">BS-TRF</div>
<div class="t c" style="left:1032px;width:104px;letter-spacing:0.28px;text-indent:0.28px;top:578px">9/20/2024</div>
<div class="t c g" style="left:1137px;width:59px;top:578px">D</div>
<div class="t r g" style="left:1197px;width:113px;letter-spacing:-0.22px;margin-left:-0.22px;top:578px">14,600.00</div>
<div class="t r g" style="left:1316px;width:107px;top:578px">-</div>
<div class="t r g" style="left:1444px;width:107px;top:578px">-</div>
<div class="t r g" style="left:1572px;width:112px;letter-spacing:-0.22px;margin-left:-0.22px;top:578px">13,000.00</div>
<div class="t c g" style="left:1690px;width:152px;letter-spacing:0.28px;text-indent:0.28px;top:578px">9/20/2024</div>
<div class="t l" style="left:18px;width:108px;letter-spacing:0.28px;top:599px">9/20/2024</div>
<div class="t l" style="left:129px;width:133px;letter-spacing:0.131px;top:599px">Transfer</div>
<div class="t l" style="left:265px;width:103px;letter-spacing:0.253px;top:599px">Bank Statement</div>
<div class="t l" style="left:371px;width:214px;letter-spacing:0.076px;top:599px">Bank Transfer</div>
<div class="t r" style="left:586px;width:110px;letter-spacing:-0.299px;margin-left:-0.299px;top:599px">-13,000.00</div>
<div class="t c" style="left:702px;width:72px;top:599px">E</div>
<div class="t c" style="left:775px;width:72px;top:599px">E</div>
<div class="t c" style="left:848px;width:71px;top:599px">B1</div>
<div class="t c" style="left:920px;width:111px;letter-spacing:-1.078px;text-indent:-1.078px;top:599px">BS-TRF</div>
<div class="t c" style="left:1032px;width:104px;letter-spacing:0.28px;text-indent:0.28px;top:599px">9/20/2024</div>
<div class="t c g" style="left:1137px;width:59px;top:599px">W</div>
<div class="t r g" style="left:1197px;width:113px;letter-spacing:-0.345px;margin-left:-0.345px;top:599px">96,664.46</div>
<div class="t r g" style="left:1316px;width:107px;top:599px">-</div>
<div class="t r g" style="left:1444px;width:107px;top:599px">-</div>
<div class="t r g" style="left:1572px;width:112px;letter-spacing:-0.299px;margin-left:-0.299px;top:599px">-13,000.00</div>
<div class="t c g" style="left:1690px;width:152px;letter-spacing:0.28px;text-indent:0.28px;top:599px">9/20/2024</div>
<div class="t l" style="left:18px;width:108px;letter-spacing:0.28px;top:620px">9/21/2024</div>
<div class="t l" style="left:129px;width:133px;letter-spacing:0.261px;top:620px">Town Council</div>
<div class="t l" style="left:265px;width:103px;letter-spacing:0.411px;top:620px">Statement</div>
<div class="t l" style="left:371px;width:214px;letter-spacing:-0.222px;top:620px">Rates</div>
<div class="t r" style="left:586px;width:110px;letter-spacing:-0.287px;margin-left:-0.287px;top:620px">-4,752.00</div>
<div class="t c" style="left:702px;width:72px;top:620px">E</div>
<div class="t c" style="left:775px;width:72px;top:620px">E</div>
<div class="t c" style="left:848px;width:71px;top:620px">B1</div>
<div class="t c" style="left:920px;width:111px;letter-spacing:-0.276px;text-indent:-0.276px;top:620px">IS-395</div>
<div class="t c" style="left:1032px;width:104px;letter-spacing:0.28px;text-indent:0.28px;top:620px">9/21/2024</div>
<div class="t c g" style="left:1137px;width:59px;top:620px">W</div>
<div class="t r g" style="left:1197px;width:113px;letter-spacing:-0.345px;margin-left:-0.345px;top:620px">91,912.46</div>
<div class="t r g" style="left:1316px;width:107px;top:620px">-</div>
<div class="t r g" style="left:1444px;width:107px;top:620px">-</div>
<div class="t r g" style="left:1572px;width:112px;letter-spacing:-0.287px;margin-left:-0.287px;top:620px">-4,752.00</div>
<div class="t c g" style="left:1690px;width:152px;letter-spacing:0.28px;text-indent:0.28px;top:620px">9/21/2024</div>
<div class="t l" style="left:18px;width:108px;letter-spacing:0.28px;top:641px">9/25/2024</div>
<div class="t l" style="left:129px;width:133px;letter-spacing:-0.882px;top:641px">Cash</div>
<div class="t l" style="left:265px;width:103px;letter-spacing:0.253px;top:641px">Bank Statement</div>
<div class="t l" style="left:371px;width:214px;letter-spacing:0.244px;top:641px">Petty Cash Reimbursement</div>
<div class="t r" style="left:586px;width:110px;letter-spacing:-0.367px;margin-left:-0.367px;top:641px">-330.00</div>
<div class="t c" style="left:702px;width:72px;top:641px">E</div>
<div class="t c" style="left:775px;width:72px;top:641px">E</div>
<div class="t c" style="left:848px;width:71px;top:641px">B1</div>
<div class="t c" style="left:920px;width:111px;letter-spacing:-1.078px;text-indent:-1.078px;top:641px">BS-TRF</div>
<div class="t c" style="left:1032px;width:104px;letter-spacing:0.28px;text-indent:0.28px;top:641px">9/25/2024</div>
<div class="t c g" style="left:1137px;width:59px;top:641px">W</div>
<div class="t r g" style="left:1197px;width:113px;letter-spacing:-0.345px;margin-left:-0.345px;top:641px">91,582.46</div>
<div class="t r g" style="left:1316px;width:107px;top:641px">-</div>
<div class="t r g" style="left:1444px;width:107px;top:641px">-</div>
<div class="t r g" style="left:1572px;width:112px;letter-spacing:-0.367px;margin-left:-0.367px;top:641px">-330.00</div>
<div class="t c g" style="left:1690px;width:152px;letter-spacing:0.28px;text-indent:0.28px;top:641px">9/25/2024</div>
<div class="t l" style="left:18px;width:108px;letter-spacing:0.28px;top:662px">9/25/2024</div>
<div class="t l" style="left:129px;width:133px;letter-spacing:-0.882px;top:662px">Cash</div>
<div class="t l" style="left:265px;width:103px;letter-spacing:0.253px;top:662px">Bank Statement</div>
<div class="t l" style="left:371px;width:214px;letter-spacing:0.244px;top:662px">Petty Cash Reimbursement</div>
<div class="t r" style="left:586px;width:110px;letter-spacing:-0.455px;margin-left:-0.455px;top:662px">330.00</div>
<div class="t c" style="left:702px;width:72px;top:662px">E</div>
<div class="t c" style="left:775px;width:72px;top:662px">E</div>
<div class="t c" style="left:848px;width:71px;top:662px">PC</div>
<div class="t c" style="left:920px;width:111px;letter-spacing:-1.078px;text-indent:-1.078px;top:662px">BS-TRF</div>
<div class="t c" style="left:1032px;width:104px;letter-spacing:0.28px;text-indent:0.28px;top:662px">9/25/2024</div>
<div class="t c g" style="left:1137px;width:59px;top:662px">D</div>
<div class="t r g" style="left:1197px;width:113px;letter-spacing:-0.054px;margin-left:-0.054px;top:662px">1,054.11</div>
<div class="t r g" style="left:1316px;width:107px;top:662px">-</div>
<div class="t r g" style="left:1444px;width:107px;top:662px">-</div>
<div class="t r g" style="left:1572px;width:112px;letter-spacing:-0.455px;margin-left:-0.455px;top:662px">330.00</div>
<div class="t c g" style="left:1690px;width:152px;letter-spacing:0.28px;text-indent:0.28px;top:662px">9/25/2024</div>
<div class="t l" style="left:18px;width:108px;letter-spacing:0.28px;top:683px">9/26/2024</div>
<div class="t l" style="left:129px;width:133px;letter-spacing:0.385px;top:683px">Payroll</div>
<div class="t l" style="left:265px;width:103px;letter-spacing:0.385px;top:683px">Payroll</div>
<div class="t l" style="left:371px;width:214px;letter-spacing:-0.17px;top:683px">Salaries</div>
<div class="t r" style="left:586px;width:110px;letter-spacing:-0.299px;margin-left:-0.299px;top:683px">-13,000.00</div>
<div class="t c" style="left:702px;width:72px;top:683px">E</div>
<div class="t c" style="left:775px;width:72px;top:683px">E</div>
<div class="t c" style="left:848px;width:71px;top:683px">B2</div>
<div class="t c" style="left:920px;width:111px;letter-spacing:-0.276px;text-indent:-0.276px;top:683px">IS-365</div>
<div class="t c" style="left:1032px;width:104px;letter-spacing:0.28px;text-indent:0.28px;top:683px">9/26/2024</div>
<div class="t c g" style="left:1137px;width:59px;top:683px">W</div>
<div class="t r g" style="left:1197px;width:113px;letter-spacing:-0.195px;margin-left:-0.195px;top:683px">1,600.00</div>
<div class="t r g" style="left:1316px;width:107px;top:683px">-</div>
<div class="t r g" style="left:1444px;width:107px;top:683px">-</div>
<div class="t r g" style="left:1572px;width:112px;letter-spacing:-0.299px;margin-left:-0.299px;top:683px">-13,000.00</div>
<div class="t c g" style="left:1690px;width:152px;letter-spacing:0.28px;text-indent:0.28px;top:683px">9/26/2024</div>
<div class="t l" style="left:18px;width:108px;letter-spacing:0.28px;top:704px">9/26/2024</div>
<div class="t l" style="left:129px;width:133px;letter-spacing:0.09px;top:704px">PR Properties</div>
<div class="t l" style="left:265px;width:103px;letter-spacing:0.39px;top:704px">Debit Order</div>
<div class="t l" style="left:371px;width:214px;letter-spacing:0.369px;top:704px">Rent</div>
<div class="t r" style="left:586px;width:110px;letter-spacing:-0.287px;margin-left:-0.287px;top:704px">-5,700.00</div>
<div class="t c" style="left:702px;width:72px;top:704px">A</div>
<div class="t c" style="left:775px;width:72px;top:704px">E</div>
<div class="t c" style="left:848px;width:71px;top:704px">B1</div>
<div class="t c" style="left:920px;width:111px;letter-spacing:-0.276px;text-indent:-0.276px;top:704px">IS-350</div>
<div class="t c" style="left:1032px;width:104px;letter-spacing:0.28px;text-indent:0.28px;top:704px">9/26/2024</div>
<div class="t c g" style="left:1137px;width:59px;top:704px">W</div>
<div class="t r g" style="left:1197px;width:113px;letter-spacing:-0.345px;margin-left:-0.345px;top:704px">85,882.46</div>
<div class="t r g" style="left:1316px;width:122px;letter-spacing:-0.367px;margin-left:-0.367px;top:704px">-786.21</div>
<div class="t r g" style="left:1444px;width:107px;top:704px">-</div>
<div class="t r g" style="left:1572px;width:112px;letter-spacing:-0.287px;margin-left:-0.287px;top:704px">-4,913.79</div>
<div class="t c g" style="left:1690px;width:152px;letter-spacing:0.28px;text-indent:0.28px;top:704px">9/26/2024</div>
<div class="t l" style="left:18px;width:108px;letter-spacing:0.28px;top:725px">9/26/2024</div>
<div class="t l" style="left:129px;width:133px;letter-spacing:-0.148px;top:725px">SQ Financial Services</div>
<div class="t l" style="left:265px;width:103px;letter-spacing:0.39px;top:725px">Debit Order</div>
<div class="t l" style="left:371px;width:214px;letter-spacing:0.33px;top:725px">Capital repayment</div>
<div class="t r" style="left:586px;width:110px;letter-spacing:-0.367px;margin-left:-0.367px;top:725px">-220.00</div>
<div class="t c" style="left:702px;width:72px;top:725px">E</div>
<div class="t c" style="left:775px;width:72px;top:725px">E</div>
<div class="t c" style="left:848px;width:71px;top:725px">B1</div>
<div class="t c" style="left:920px;width:111px;letter-spacing:-0.451px;text-indent:-0.451px;top:725px">BS-700</div>
<div class="t c" style="left:1032px;width:104px;letter-spacing:0.28px;text-indent:0.28px;top:725px">9/26/2024</div>
<div class="t c g" style="left:1137px;width:59px;top:725px">W</div>
<div class="t r g" style="left:1197px;width:113px;letter-spacing:-0.345px;margin-left:-0.345px;top:725px">85,662.46</div>
<div class="t r g" style="left:1316px;width:107px;top:725px">-</div>
<div class="t r g" style="left:1444px;width:107px;top:725px">-</div>
<div class="t r g" style="left:1572px;width:112px;letter-spacing:-0.367px;margin-left:-0.367px;top:725px">-220.00</div>
<div class="t c g" style="left:1690px;width:152px;letter-spacing:0.28px;text-indent:0.28px;top:725px">9/26/2024</div>
<div class="t l" style="left:18px;width:108px;letter-spacing:0.28px;top:746px">9/26/2024</div>
<div class="t l" style="left:129px;width:133px;letter-spacing:-0.148px;top:746px">SQ Financial Services</div>
<div class="t l" style="left:265px;width:103px;letter-spacing:0.39px;top:746px">Debit Order</div>
<div class="t l" style="left:371px;width:214px;letter-spacing:0.535px;top:746px">Interest paid</div>
<div class="t r" style="left:586px;width:110px;letter-spacing:-0.367px;margin-left:-0.367px;top:746px">-100.00</div>
<div class="t c" style="left:702px;width:72px;top:746px">E</div>
<div class="t c" style="left:775px;width:72px;top:746px">E</div>
<div class="t c" style="left:848px;width:71px;top:746px">B1</div>
<div class="t c" style="left:920px;width:111px;letter-spacing:-0.276px;text-indent:-0.276px;top:746px">IS-500</div>
<div class="t c" style="left:1032px;width:104px;letter-spacing:0.28px;text-indent:0.28px;top:746px">9/26/2024</div>
<div class="t c g" style="left:1137px;width:59px;top:746px">W</div>
<div class="t r g" style="left:1197px;width:113px;letter-spacing:-0.345px;margin-left:-0.345px;top:746px">85,562.46</div>
<div class="t r g" style="left:1316px;width:107px;top:746px">-</div>
<div class="t r g" style="left:1444px;width:107px;top:746px">-</div>
<div class="t r g" style="left:1572px;width:112px;letter-spacing:-0.367px;margin-left:-0.367px;top:746px">-100.00</div>
<div class="t c g" style="left:1690px;width:152px;letter-spacing:0.28px;text-indent:0.28px;top:746px">9/26/2024</div>
<div class="t l" style="left:18px;width:108px;letter-spacing:0.405px;top:767px">10/1/2024</div>
<div class="t l" style="left:129px;width:133px;letter-spacing:-0.117px;top:767px">XY Solutions</div>
<div class="t l" style="left:265px;width:103px;letter-spacing:-0.152px;top:767px">Invoice EXP16</div>
<div class="t l" style="left:371px;width:214px;letter-spacing:0.367px;top:767px">Internet Service Provider</div>
<div class="t r" style="left:586px;width:110px;letter-spacing:-0.367px;margin-left:-0.367px;top:767px">-204.06</div>
<div class="t c" style="left:702px;width:72px;top:767px">A</div>
<div class="t c" style="left:775px;width:72px;top:767px">E</div>
<div class="t c" style="left:848px;width:71px;top:767px">B1</div>
<div class="t c" style="left:920px;width:111px;letter-spacing:-0.276px;text-indent:-0.276px;top:767px">IS-380</div>
<div class="t c" style="left:1032px;width:104px;letter-spacing:0.405px;text-indent:0.405px;top:767px">10/1/2024</div>
<div class="t c g" style="left:1137px;width:59px;top:767px">W</div>
<div class="t r g" style="left:1197px;width:113px;letter-spacing:-0.345px;margin-left:-0.345px;top:767px">85,358.40</div>
<div class="t r g" style="left:1316px;width:122px;letter-spacing:-0.362px;margin-left:-0.362px;top:767px">-28.15</div>
<div class="t r g" style="left:1444px;width:107px;top:767px">-</div>
<div class="t r g" style="left:1572px;width:112px;letter-spacing:-0.367px;margin-left:-0.367px;top:767px">-175.91</div>
<div class="t c g" style="left:1690px;width:152px;letter-spacing:0.405px;text-indent:0.405px;top:767px">10/1/2024</div>
<div class="t l" style="left:18px;width:108px;letter-spacing:0.405px;top:788px">10/3/2024</div>
<div class="t l" style="left:129px;width:133px;letter-spacing:0.039px;top:788px">IAS Accountants</div>
<div class="t l" style="left:265px;width:103px;letter-spacing:0.494px;top:788px">Invoice</div>
<div class="t l" style="left:371px;width:214px;letter-spacing:0.521px;top:788px">Bookkeeping</div>
<div class="t r" style="left:586px;width:110px;letter-spacing:-0.367px;margin-left:-0.367px;top:788px">-912.00</div>
<div class="t c" style="left:702px;width:72px;top:788px">A</div>
<div class="t c" style="left:775px;width:72px;top:788px">E</div>
<div class="t c" style="left:848px;width:71px;top:788px">B1</div>
<div class="t c" style="left:920px;width:111px;letter-spacing:-0.276px;text-indent:-0.276px;top:788px">IS-305</div>
<div class="t c" style="left:1032px;width:104px;letter-spacing:0.405px;text-indent:0.405px;top:788px">10/3/2024</div>
<div class="t c g" style="left:1137px;width:59px;top:788px">W</div>
<div class="t r g" style="left:1197px;width:113px;letter-spacing:-0.345px;margin-left:-0.345px;top:788px">84,446.40</div>
<div class="t r g" style="left:1316px;width:122px;letter-spacing:-0.367px;margin-left:-0.367px;top:788px">-125.79</div>
<div class="t r g" style="left:1444px;width:107px;top:788px">-</div>
<div class="t r g" style="left:1572px;width:112px;letter-spacing:-0.367px;margin-left:-0.367px;top:788px">-786.21</div>
<div class="t c g" style="left:1690px;width:152px;letter-spacing:0.405px;text-indent:0.405px;top:788px">10/3/2024</div>
<div class="t l" style="left:18px;width:108px;letter-spacing:0.405px;top:809px">10/4/2024</div>
<div class="t l" style="left:129px;width:133px;letter-spacing:-1.207px;top:809px">SPAR</div>
<div class="t l" style="left:265px;width:103px;letter-spacing:0.041px;top:809px">IN1145</div>
<div class="t l" style="left:371px;width:214px;letter-spacing:0.085px;top:809px">Consumables</div>
<div class="t r" style="left:586px;width:110px;letter-spacing:-0.362px;margin-left:-0.362px;top:809px">-59.28</div>
<div class="t c" style="left:702px;width:72px;top:809px">A</div>
<div class="t c" style="left:775px;width:72px;top:809px">E</div>
<div class="t c" style="left:848px;width:71px;top:809px">PC</div>
<div class="t c" style="left:920px;width:111px;letter-spacing:-0.276px;text-indent:-0.276px;top:809px">IS-325</div>
<div class="t c" style="left:1032px;width:104px;letter-spacing:0.405px;text-indent:0.405px;top:809px">10/4/2024</div>
<div class="t c g" style="left:1137px;width:59px;top:809px">W</div>
<div class="t r g" style="left:1197px;width:113px;letter-spacing:-0.455px;margin-left:-0.455px;top:809px">994.83</div>
<div class="t r g" style="left:1316px;width:122px;letter-spacing:-0.353px;margin-left:-0.353px;top:809px">-8.18</div>
<div class="t r g" style="left:1444px;width:107px;top:809px">-</div>
<div class="t r g" style="left:1572px;width:112px;letter-spacing:-0.362px;margin-left:-0.362px;top:809px">-51.10</div>
<div class="t c g" style="left:1690px;width:152px;letter-spacing:0.405px;text-indent:0.405px;top:809px">10/4/2024</div>
<div class="t l" style="left:18px;width:108px;letter-spacing:0.405px;top:830px">10/5/2024</div>
<div class="t l" style="left:129px;width:133px;letter-spacing:0.545px;top:830px">Hollard</div>
<div class="t l" style="left:265px;width:103px;letter-spacing:0.39px;top:830px">Debit Order</div>
<div class="t l" style="left:371px;width:214px;letter-spacing:0.275px;top:830px">Insurance</div>
<div class="t r" style="left:586px;width:110px;letter-spacing:-0.367px;margin-left:-0.367px;top:830px">-364.80</div>
<div class="t c" style="left:702px;width:72px;top:830px">A</div>
<div class="t c" style="left:775px;width:72px;top:830px">E</div>
<div class="t c" style="left:848px;width:71px;top:830px">B1</div>
<div class="t c" style="left:920px;width:111px;letter-spacing:-0.276px;text-indent:-0.276px;top:830px">IS-340</div>
<div class="t c" style="left:1032px;width:104px;letter-spacing:0.405px;text-indent:0.405px;top:830px">10/5/2024</div>
<div class="t c g" style="left:1137px;width:59px;top:830px">W</div>
<div class="t r g" style="left:1197px;width:113px;letter-spacing:-0.345px;margin-left:-0.345px;top:830px">84,081.60</div>
<div class="t r g" style="left:1316px;width:122px;letter-spacing:-0.362px;margin-left:-0.362px;top:830px">-50.32</div>
<div class="t r g" style="left:1444px;width:107px;top:830px">-</div>
<div class="t r g" style="left:1572px;width:112px;letter-spacing:-0.367px;margin-left:-0.367px;top:830px">-314.48</div>
<div class="t c g" style="left:1690px;width:152px;letter-spacing:0.405px;text-indent:0.405px;top:830px">10/5/2024</div>
<div style="left:0;top:0;width:3px;height:841px;background:#f0f0f0"></div>
<div style="left:0;top:45px;width:3px;height:1px;background:#cfcfcf"></div>
<div style="left:0;top:78px;width:3px;height:1px;background:#cfcfcf"></div>
<div style="left:0;top:99px;width:3px;height:1px;background:#cfcfcf"></div>
<div style="left:0;top:156px;width:3px;height:1px;background:#cfcfcf"></div>
<div style="left:0;top:177px;width:3px;height:1px;background:#cfcfcf"></div>
<div style="left:0;top:198px;width:3px;height:1px;background:#cfcfcf"></div>
<div style="left:0;top:219px;width:3px;height:1px;background:#cfcfcf"></div>
<div style="left:0;top:240px;width:3px;height:1px;background:#cfcfcf"></div>
<div style="left:0;top:261px;width:3px;height:1px;background:#cfcfcf"></div>
<div style="left:0;top:282px;width:3px;height:1px;background:#cfcfcf"></div>
<div style="left:0;top:303px;width:3px;height:1px;background:#cfcfcf"></div>
<div style="left:0;top:324px;width:3px;height:1px;background:#cfcfcf"></div>
<div style="left:0;top:345px;width:3px;height:1px;background:#cfcfcf"></div>
<div style="left:0;top:366px;width:3px;height:1px;background:#cfcfcf"></div>
<div style="left:0;top:387px;width:3px;height:1px;background:#cfcfcf"></div>
<div style="left:0;top:408px;width:3px;height:1px;background:#cfcfcf"></div>
<div style="left:0;top:429px;width:3px;height:1px;background:#cfcfcf"></div>
<div style="left:0;top:450px;width:3px;height:1px;background:#cfcfcf"></div>
<div style="left:0;top:471px;width:3px;height:1px;background:#cfcfcf"></div>
<div style="left:0;top:492px;width:3px;height:1px;background:#cfcfcf"></div>
<div style="left:0;top:513px;width:3px;height:1px;background:#cfcfcf"></div>
<div style="left:0;top:534px;width:3px;height:1px;background:#cfcfcf"></div>
<div style="left:0;top:555px;width:3px;height:1px;background:#cfcfcf"></div>
<div style="left:0;top:576px;width:3px;height:1px;background:#cfcfcf"></div>
<div style="left:0;top:597px;width:3px;height:1px;background:#cfcfcf"></div>
<div style="left:0;top:618px;width:3px;height:1px;background:#cfcfcf"></div>
<div style="left:0;top:639px;width:3px;height:1px;background:#cfcfcf"></div>
<div style="left:0;top:660px;width:3px;height:1px;background:#cfcfcf"></div>
<div style="left:0;top:681px;width:3px;height:1px;background:#cfcfcf"></div>
<div style="left:0;top:702px;width:3px;height:1px;background:#cfcfcf"></div>
<div style="left:0;top:723px;width:3px;height:1px;background:#cfcfcf"></div>
<div style="left:0;top:744px;width:3px;height:1px;background:#cfcfcf"></div>
<div style="left:0;top:765px;width:3px;height:1px;background:#cfcfcf"></div>
<div style="left:0;top:786px;width:3px;height:1px;background:#cfcfcf"></div>
<div style="left:0;top:807px;width:3px;height:1px;background:#cfcfcf"></div>
<div style="left:0;top:828px;width:3px;height:1px;background:#cfcfcf"></div>
<div style="left:0;top:849px;width:3px;height:1px;background:#cfcfcf"></div>
<div style="left:-38.4px;width:40px;top:241px;height:21px;line-height:21px;text-align:right;font-size:12px;color:#3b8ad9">10</div>
<div style="left:-38.4px;width:40px;top:262px;height:21px;line-height:21px;text-align:right;font-size:12px;color:#3b8ad9">11</div>
<div style="left:-38.4px;width:40px;top:283px;height:21px;line-height:21px;text-align:right;font-size:12px;color:#3b8ad9">12</div>
<div style="left:-38.4px;width:40px;top:304px;height:21px;line-height:21px;text-align:right;font-size:12px;color:#3b8ad9">13</div>
<div style="left:-38.4px;width:40px;top:325px;height:21px;line-height:21px;text-align:right;font-size:12px;color:#3b8ad9">14</div>
<div style="left:-38.4px;width:40px;top:346px;height:21px;line-height:21px;text-align:right;font-size:12px;color:#3b8ad9">15</div>
<div style="left:-38.4px;width:40px;top:367px;height:21px;line-height:21px;text-align:right;font-size:12px;color:#3b8ad9">16</div>
<div style="left:-38.4px;width:40px;top:388px;height:21px;line-height:21px;text-align:right;font-size:12px;color:#3b8ad9">17</div>
<div style="left:-38.4px;width:40px;top:409px;height:21px;line-height:21px;text-align:right;font-size:12px;color:#3b8ad9">18</div>
<div style="left:-38.4px;width:40px;top:430px;height:21px;line-height:21px;text-align:right;font-size:12px;color:#3b8ad9">19</div>
<div style="left:-38.4px;width:40px;top:451px;height:21px;line-height:21px;text-align:right;font-size:12px;color:#3b8ad9">20</div>
<div style="left:-38.4px;width:40px;top:472px;height:21px;line-height:21px;text-align:right;font-size:12px;color:#3b8ad9">21</div>
<div style="left:-38.4px;width:40px;top:493px;height:21px;line-height:21px;text-align:right;font-size:12px;color:#3b8ad9">22</div>
<div style="left:-38.4px;width:40px;top:514px;height:21px;line-height:21px;text-align:right;font-size:12px;color:#3b8ad9">23</div>
<div style="left:-38.4px;width:40px;top:535px;height:21px;line-height:21px;text-align:right;font-size:12px;color:#3b8ad9">24</div>
<div style="left:-38.4px;width:40px;top:556px;height:21px;line-height:21px;text-align:right;font-size:12px;color:#3b8ad9">25</div>
<div style="left:-38.4px;width:40px;top:577px;height:21px;line-height:21px;text-align:right;font-size:12px;color:#3b8ad9">26</div>
<div style="left:-38.4px;width:40px;top:598px;height:21px;line-height:21px;text-align:right;font-size:12px;color:#3b8ad9">27</div>
<div style="left:-38.4px;width:40px;top:619px;height:21px;line-height:21px;text-align:right;font-size:12px;color:#3b8ad9">28</div>
<div style="left:-38.4px;width:40px;top:640px;height:21px;line-height:21px;text-align:right;font-size:12px;color:#3b8ad9">29</div>
<div style="left:-38.4px;width:40px;top:661px;height:21px;line-height:21px;text-align:right;font-size:12px;color:#3b8ad9">30</div>
<div style="left:-38.4px;width:40px;top:682px;height:21px;line-height:21px;text-align:right;font-size:12px;color:#3b8ad9">31</div>
<div style="left:-38.4px;width:40px;top:703px;height:21px;line-height:21px;text-align:right;font-size:12px;color:#3b8ad9">32</div>
<div style="left:-38.4px;width:40px;top:724px;height:21px;line-height:21px;text-align:right;font-size:12px;color:#3b8ad9">33</div>
<div style="left:-38.4px;width:40px;top:745px;height:21px;line-height:21px;text-align:right;font-size:12px;color:#3b8ad9">34</div>
<div style="left:-38.4px;width:40px;top:766px;height:21px;line-height:21px;text-align:right;font-size:12px;color:#3b8ad9">35</div>
<div style="left:-38.4px;width:40px;top:787px;height:21px;line-height:21px;text-align:right;font-size:12px;color:#3b8ad9">36</div>
<div style="left:-38.4px;width:40px;top:808px;height:21px;line-height:21px;text-align:right;font-size:12px;color:#3b8ad9">37</div>
<div style="left:-38.4px;width:40px;top:829px;height:21px;line-height:21px;text-align:right;font-size:12px;color:#3b8ad9">38</div>
<div style="left:3px;top:0;width:1px;height:841px;background:#a6a6a6"></div>
<div style="left:4px;top:0;width:1px;height:1px;background:#222"></div>
<div style="left:0;top:134px;width:15px;height:1px;background:#6e6e6e"></div>
</div>
<div style="left:1879px;top:5px;width:12px;height:861px;background:#f5f5f5;border-radius:6px;z-index:3"></div>
<div style="left:1883px;top:385px;width:6px;height:128px;background:#6f6f6f;border-radius:3px;z-index:4"></div>
<svg style="position:absolute;left:1882px;top:9px;z-index:4" width="8" height="9" viewBox="0 0 8 9"><path d="M0.3 7.8 L5 2.2 L9.7 7.8 Z" fill="#6f6f6f"/></svg>
<svg style="position:absolute;left:1882px;top:853px;z-index:4" width="8" height="9" viewBox="0 0 8 9"><path d="M0.3 1.2 L5 6.8 L9.7 1.2 Z" fill="#6f6f6f"/></svg>
<div id="tabs">
<svg style="position:absolute;left:0px;top:8px" width="50" height="16" viewBox="0 0 50 16"><path d="M12.5 3 L7 8 L12.5 13" fill="none" stroke="#8a8a8a" stroke-width="1.2"/><path d="M39.5 3 L45 8 L39.5 13" fill="none" stroke="#8a8a8a" stroke-width="1.2"/></svg>
<div class="tab pill" style="left:94px;width:91px;letter-spacing:-0.07px">Instructions</div>
<div class="sep" style="left:189px"></div>
<div class="tab" style="left:190px;width:61px;letter-spacing:-0.5px">Setup</div>
<div class="sep" style="left:251px"></div>
<div style="left:256px;top:0;width:46px;height:28px;background:#fff;border-radius:0 0 5px 5px"></div>
<div style="left:252px;top:0;width:4px;height:4px;background:radial-gradient(circle at 0 100%,#e6e6e6 3.6px,#fff 4.4px)"></div>
<div style="left:302px;top:0;width:4px;height:4px;background:radial-gradient(circle at 100% 100%,#e6e6e6 3.6px,#fff 4.4px)"></div>
<div class="tab" style="left:256px;width:46px;font-weight:bold;top:1px;color:#2a2a2a;letter-spacing:-0.8px">Data</div>
<div style="left:264px;top:23px;width:30px;height:2px;background:#107c41;border-radius:1px"></div>
<div class="sep" style="left:306px"></div>
<div class="tab" style="left:307px;width:87px;letter-spacing:-0.5px">Cashbook</div>
<div class="sep" style="left:394px"></div>
<div class="tab" style="left:395px;width:113px;letter-spacing:-0.18px">Reconciliation</div>
<div class="sep" style="left:508px"></div>
<div class="tab" style="left:509px;width:93px;letter-spacing:-0.31px">Dashboard</div>
<div class="sep" style="left:602px"></div>
<div class="tab pill" style="left:607px;width:93px;letter-spacing:-0.33px">Calculations</div>
<div class="sep" style="left:704px"></div>
<svg style="position:absolute;left:746px;top:9px" width="13" height="13" viewBox="0 0 13 13"><path d="M6.5 1 V12 M1 6.5 H12" stroke="#3a3a3a" stroke-width="1.2" fill="none"/></svg>
<div style="left:1483px;top:12px;width:2px;height:2px;background:#2a2a2a"></div>
<div style="left:1483px;top:16px;width:2px;height:2px;background:#2a2a2a"></div>
<div style="left:1483px;top:20px;width:2px;height:2px;background:#2a2a2a"></div>
<div style="left:1500px;top:7px;width:376px;height:17px;background:#f5f5f5;border-radius:9px"></div>
<div style="left:1517px;top:11px;width:148px;height:9px;background:#6f6f6f;border-radius:5px"></div>
<svg style="position:absolute;left:1504px;top:10px" width="10" height="11" viewBox="0 0 10 11"><path d="M1 5.5 L8.5 1 V10 Z" fill="#6f6f6f"/></svg>
<svg style="position:absolute;left:1863px;top:10px" width="10" height="11" viewBox="0 0 10 11"><path d="M9 5.5 L1.5 1 V10 Z" fill="#6f6f6f"/></svg>
</div>
<div style="left:0;top:896px;width:1885px;height:2px;background:#f8f8f8"></div>
<div style="left:1598px;top:897px;width:40px;height:1px;background:#dedede"></div>
<div style="left:1875px;top:9px;width:1px;height:9px;background:#f1eea6"></div>
</div></body></html>
